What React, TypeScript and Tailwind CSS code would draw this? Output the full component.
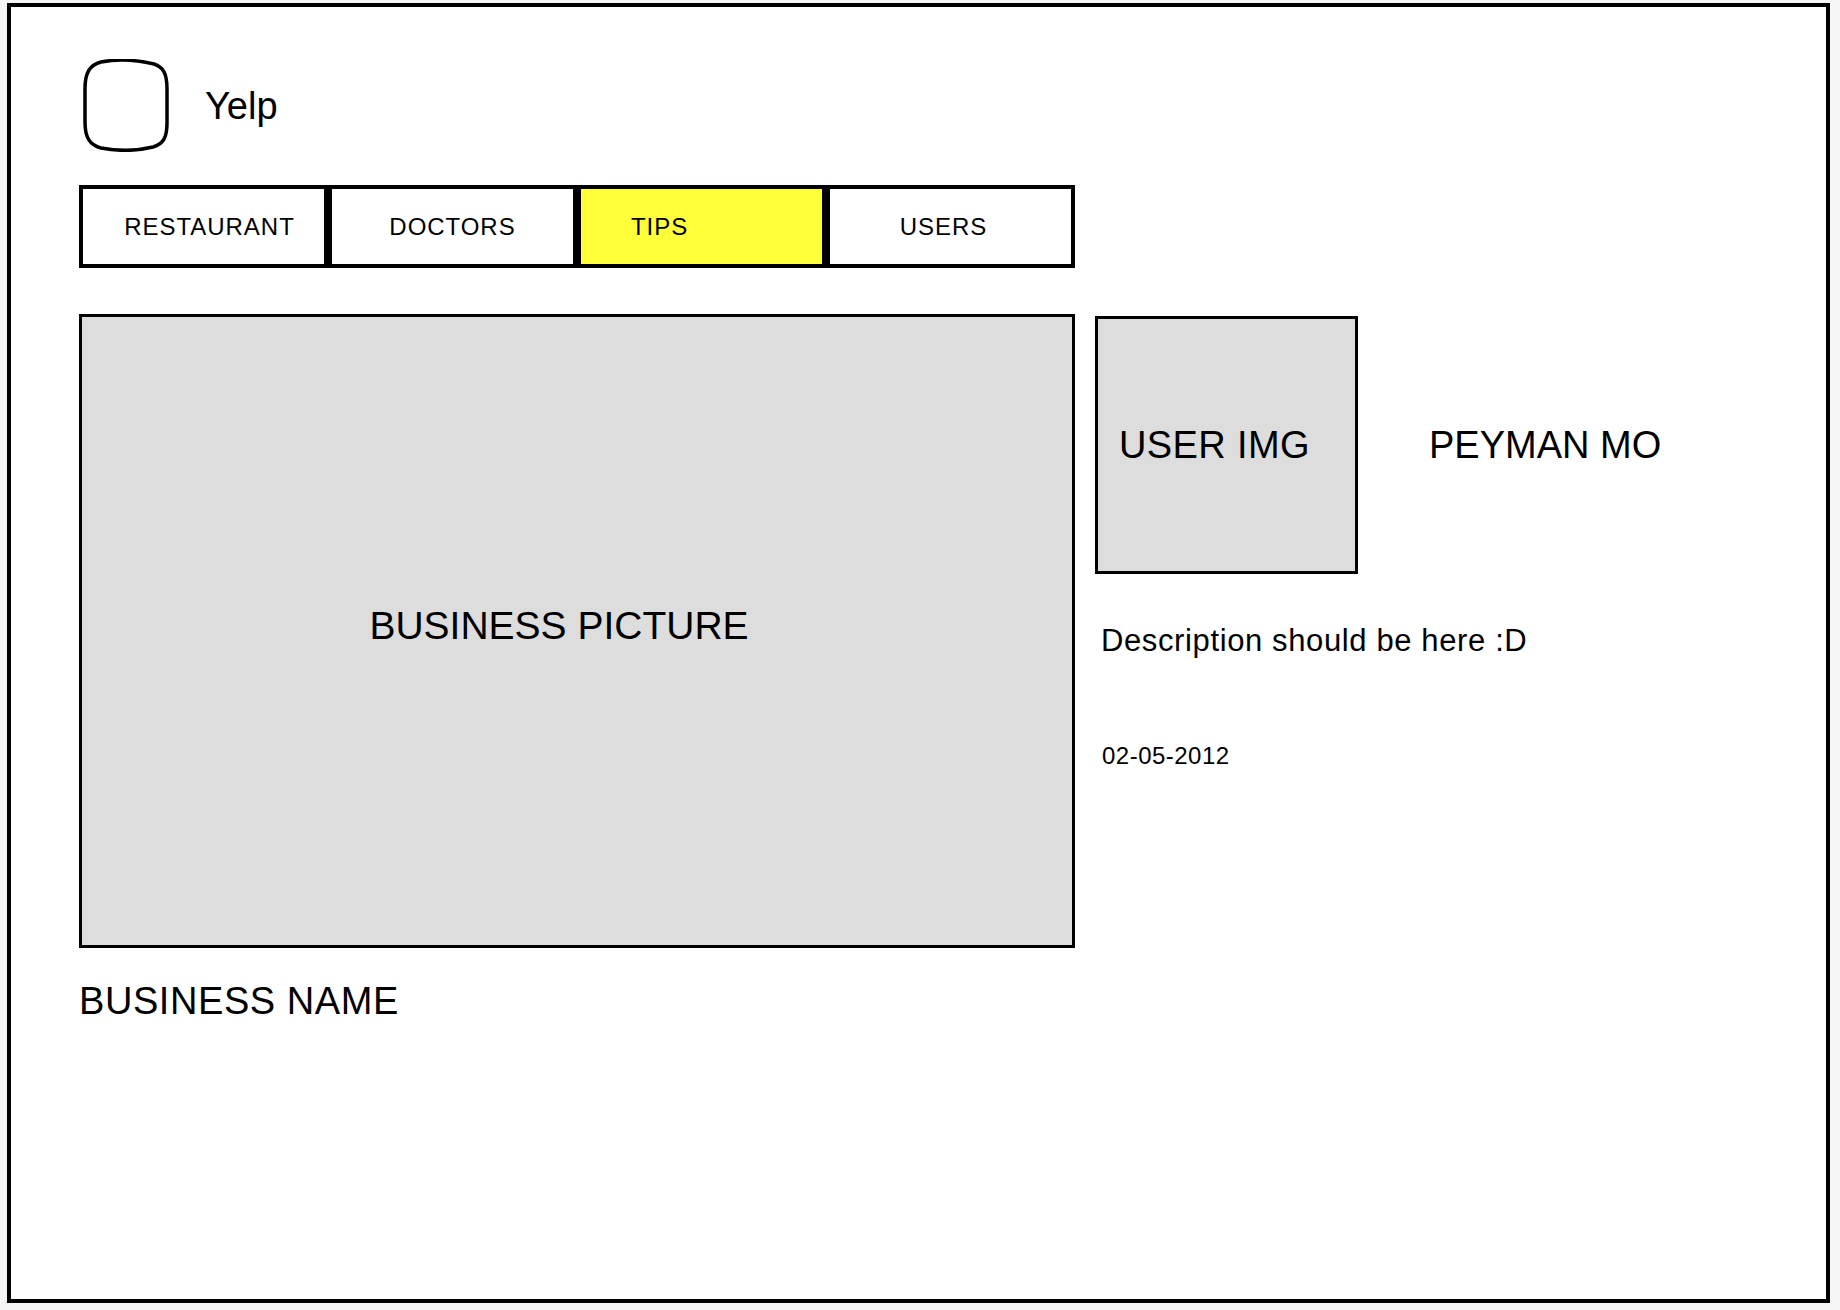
import React from 'react';

const font = { fontFamily: '"Liberation Sans", Arial, sans-serif' };

function Logo() {
  return (
    <svg width="90" height="93" viewBox="0 0 90 93" className="ml-[2px] shrink-0">
      <path
        d="M20,3 C36,0 56,1 73,5 C82,8 86,14 86,30 L86,64 C86,79 82,85 72,88 C56,92 36,92 20,89 C9,86 4,79 4,63 L4,30 C4,13 9,6 20,3 Z"
        fill="none"
        stroke="#000"
        strokeWidth="3.5"
      />
    </svg>
  );
}

export default function App() {
  return (
    <div className="w-[1840px] h-[1310px] bg-[#f6f6f6] pl-[7px] pt-[3px]" style={font}>
      <div className="w-[1823px] h-[1300px] border-4 border-black bg-white pl-[68px] pt-[52px] text-black">
        {/* header */}
        <div className="flex items-center gap-[34px] h-[93px]">
          <Logo />
          <span className="text-[38px] leading-none">Yelp</span>
        </div>

        {/* tabs */}
        <div className="flex mt-[33px] text-[24px] leading-none tracking-[0.04em]">
          <div className="w-[249px] h-[83px] border-4 border-black bg-white flex items-center justify-center pl-[12px]">
            RESTAURANT
          </div>
          <div className="w-[249px] h-[83px] border-4 border-black bg-white flex items-center justify-center">
            DOCTORS
          </div>
          <div className="w-[249px] h-[83px] border-4 border-black bg-[#ffff3a] flex items-center pl-[50px]">
            TIPS
          </div>
          <div className="w-[249px] h-[83px] border-4 border-black bg-white flex items-center justify-center pr-[14px]">
            USERS
          </div>
        </div>

        {/* main */}
        <div className="flex items-start mt-[46px]">
          <div className="w-[996px] h-[634px] border-[3px] border-black bg-[#dddddd] flex items-center justify-center pr-[36px] pb-[12px] text-[39px] leading-none">
            BUSINESS PICTURE
          </div>

          <div className="ml-[20px] flex flex-col">
            <div className="flex items-center mt-[2px]">
              <div className="w-[263px] h-[258px] border-[3px] border-black bg-[#dddddd] flex items-center pl-[21px] text-[38px] leading-none tracking-[0.01em]">
                USER IMG
              </div>
              <span className="ml-[71px] text-[38px] leading-none">PEYMAN MO</span>
            </div>
            <p className="mt-[51px] ml-[6px] text-[31px] leading-none tracking-[0.02em]">
              Description should be here :D
            </p>
            <p className="mt-[88px] ml-[7px] text-[24px] leading-none tracking-[0.02em]">02-05-2012</p>
          </div>
        </div>

        <p className="mt-[34px] text-[38px] leading-none tracking-[0.015em]">BUSINESS NAME</p>
      </div>
    </div>
  );
}
